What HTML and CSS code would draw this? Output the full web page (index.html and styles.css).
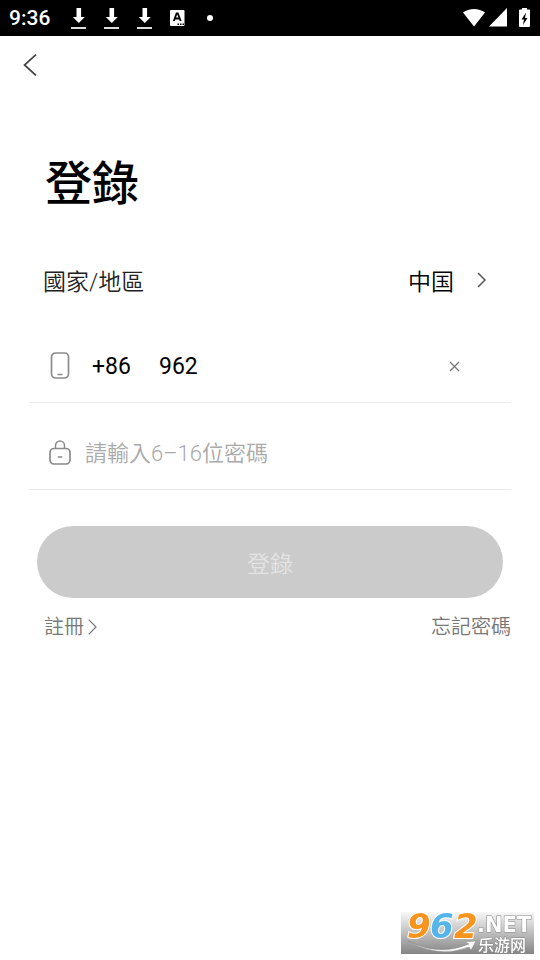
FILE: index.html
```html
<!DOCTYPE html>
<html lang="zh-Hant">
<head>
<meta charset="utf-8">
<meta name="viewport" content="width=device-width, initial-scale=1">
<title>登錄</title>
<link rel="stylesheet" href="styles.css">
</head>
<body>
<div class="status">
  <span class="clock">9:36</span>
  <div class="notices">
    <svg width="16" height="22" viewBox="0 0 16 22"><path d="M5.500 1h4.600v9h3.700l-6 6-6-6h3.700z" fill="#fff"/><path d="M0 20h15v2H0z" fill="#ddd"/></svg>
    <svg width="16" height="22" viewBox="0 0 16 22"><path d="M5.500 1h4.600v9h3.700l-6 6-6-6h3.700z" fill="#fff"/><path d="M0 20h15v2H0z" fill="#ddd"/></svg>
    <svg width="16" height="22" viewBox="0 0 16 22"><path d="M5.500 1h4.600v9h3.700l-6 6-6-6h3.700z" fill="#fff"/><path d="M0 20h15v2H0z" fill="#ddd"/></svg>
    <svg width="16" height="22" viewBox="0 0 16 22"><rect x="0" y="3" width="14.500" height="16" rx="1" fill="#fff"/><path d="M3.800 14 6.600 6.500h1.200l2.900 7.500M5 11.500h4.600" fill="none" stroke="#000" stroke-width="1.800"/><path d="M7.500 16.500H9V18H7.500zM10 16.500h1.500V18H10zM12.500 16.500H14V18h-1.500z"/></svg>
  </div>
  <span class="dot"></span>
  <div class="system">
    <svg width="24" height="20" viewBox="0 0 24 20"><path d="M1 4.500C7-.3 17-.3 23 4.500L12 18.500z" fill="#fff"/></svg>
    <svg width="18" height="20" viewBox="0 0 18 20"><path d="M18 0v18.500H0z" fill="#fff"/></svg>
    <svg class="battery" width="11" height="20" viewBox="0 0 11 20"><path d="M3 0h5v1.500h2q1 0 1 1V18q0 1-1 1H1q-1 0-1-1V2.500q0-1 1-1h2z" fill="#fff"/><path d="M7 4.500 2.500 11.500H5L4 17l4.500-7H6z"/></svg>
  </div>
</div>
<header class="nav">
  <button class="back" type="button" aria-label="返回"><svg width="14" height="22" viewBox="0 0 14 22"><path d="M13 .7 1.500 11 13 21.500" fill="none" stroke="#444" stroke-width="1.700"/></svg></button>
</header>
<main>
  <h1>登錄</h1>
  <form>
    <div class="country">
      <span>國家/地區</span>
      <button type="button" class="pick">中国<svg width="9" height="16" viewBox="0 0 9 16"><path d="M1 1l7 7-7 7" fill="none" stroke="#555" stroke-width="1.500"/></svg></button>
    </div>
    <div class="field phone">
      <svg width="20" height="28" viewBox="0 0 20 28"><rect x="1.500" y="1" width="17" height="25" rx="4" fill="none" stroke="#8b8b8b" stroke-width="1.700"/><path d="M7.500 22.500h5" stroke="#8b8b8b" stroke-width="1.500"/></svg>
      <label for="phone">+86</label>
      <input id="phone" type="tel" value="962">
      <button type="button" class="clear" aria-label="清除"><svg width="11" height="11" viewBox="0 0 11 11"><path d="M1 1l9 9M10 1l-9 9" fill="none" stroke="#777" stroke-width="1.300"/></svg></button>
    </div>
    <div class="field password">
      <svg width="24" height="28" viewBox="0 0 24 28"><rect x="2" y="9.500" width="20" height="15.500" rx="4" fill="none" stroke="#8b8b8b" stroke-width="1.700"/><path d="M7.500 9.500V6.500a4.500 4.500 0 0 1 9 0v3M9.800 18h4.500" fill="none" stroke="#8b8b8b" stroke-width="1.500"/></svg>
      <input type="password" aria-label="密碼" placeholder="請輸入6–16位密碼">
    </div>
    <button class="submit" type="submit" disabled>登錄</button>
    <div class="links">
      <a href="#register">註冊<svg width="9" height="16" viewBox="0 0 9 16"><path d="M.7.700 8 8 .7 15.300" fill="none" stroke="#777" stroke-width="1.200"/></svg></a>
      <a href="#forgot">忘記密碼</a>
    </div>
  </form>
</main>
<div class="mark">
  <svg width="133" height="42" viewBox="0 0 133 42">
    <path d="M7 29Q38 45 68 32l-4-2 11-1-5 9-2-3Q38 47 7 29z" fill="#fff" stroke="#888" stroke-width=".5"/>
    <g class="digits"><text x="6" y="26">9</text><text x="29" y="26" class="blue">6</text><text x="53" y="26">2</text></g>
    <text class="net" x="76" y="20">.NET</text>
    <text class="site" x="77" y="39">乐游网</text>
  </svg>
</div>
</body>
</html>
```
FILE: styles.css
```css
* { box-sizing: border-box; }
body {
  margin: 0;
  min-height: 100vh;
  background: #fff;
  color: #000;
  font-family: Roboto, "Noto Sans CJK TC", sans-serif;
  font-size: 22px;
  font-weight: 350;
}
svg { display: block; flex: none; }
button, input { font: inherit; color: inherit; background: none; border: 0; padding: 0; margin: 0; }
.status {
  display: flex;
  align-items: center;
  height: 36px;
  padding: 0 10px 0 9px;
  background: #000;
  color: #fff;
}
.clock { font: 500 21px/36px Roboto, sans-serif; width: 62px; }
.notices { display: flex; gap: 17px; }
.dot { width: 6px; height: 6px; margin-left: 21px; border-radius: 50%; background: #fff; }
.system { display: flex; gap: 3px; margin-left: auto; }
.battery { margin-left: 9px; }
.nav { height: 58px; padding: 18px 23px; }
.back { display: block; }
main { padding: 0 29px; }
h1 { margin: 54px 16px 0; font-size: 47px; line-height: 72px; font-weight: 500; }
.country {
  display: flex;
  justify-content: space-between;
  align-items: center;
  height: 60px;
  margin-top: 30px;
  padding: 0 25px 0 14px;
  font-size: 23px;
  color: #222;
}
.pick { display: flex; align-items: center; gap: 23px; color: #000; }
.field {
  display: flex;
  align-items: center;
  height: 87px;
  padding: 14px 0 0 21px;
  border-bottom: 1px solid #ebebeb;
}
.field input { flex: 1; min-width: 0; outline: 0; }
.phone { margin-top: 6px; font-size: 23px; font-weight: 400; }
.phone label { width: 67px; margin-left: 22px; }
.clear { margin-right: 51px; }
.password { padding-left: 19px; }
.password input { margin-left: 13px; line-height: 32px; padding-top: 2px; }
.password input::placeholder { color: #aaa; opacity: 1; }
.submit {
  display: block;
  width: calc(100% - 16px);
  height: 72px;
  margin: 36px 8px 0;
  border-radius: 36px;
  background: #cbcbcb;
  color: #e4e4e4;
  font-size: 23px;
}
.links { display: flex; justify-content: space-between; padding: 14px 0 0 15px; font-size: 20px; line-height: 30px; }
.links a { display: flex; align-items: center; gap: 4px; color: #777; text-decoration: none; }
.mark { position: fixed; right: 6px; bottom: 6px; background: linear-gradient(#f8f8f8, #858585); }
.mark svg { overflow: visible; }
.mark text { fill: #fff; stroke: #888; stroke-width: 1px; paint-order: stroke; }
.mark .digits text { fill: #f7941d; stroke: #fff; stroke-width: 2px; font: italic 700 34px "DejaVu Sans", sans-serif; }
.mark .digits .blue { fill: #55b5ea; }
.mark .net { font: 700 21px "DejaVu Sans", sans-serif; }
.mark .site { font: 500 16px "Noto Sans CJK SC", sans-serif; }
```
